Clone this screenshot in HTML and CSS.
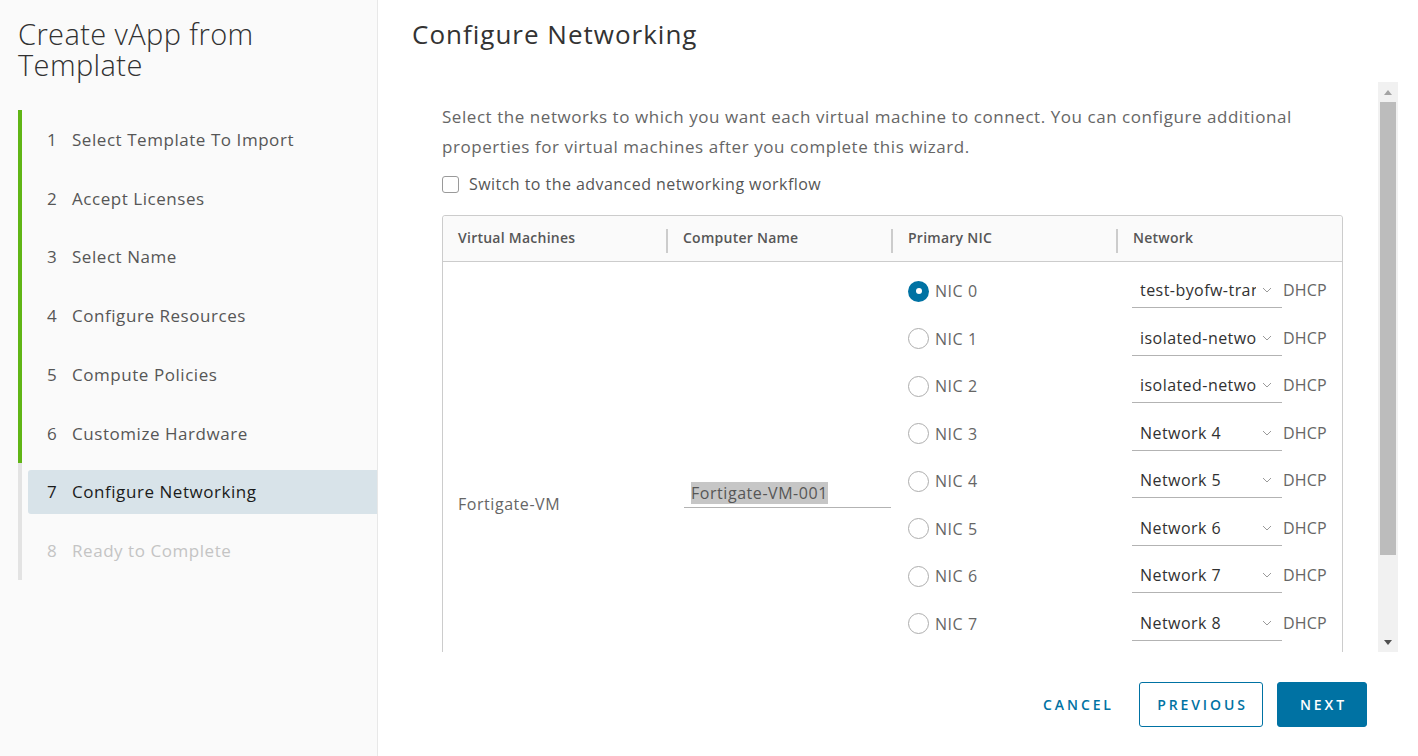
FILE: index.html
```html
<!DOCTYPE html>
<html>
<head>
<meta charset="utf-8">
<link rel="stylesheet" href="styles.css">
</head>
<body>
<div class="wizard">
  <aside class="sidebar">
    <h1 class="wiz-title">Create vApp from Template</h1>
    <ol class="steps">
      <li class="step done"><div class="step-link"><span class="num">1</span>Select Template To Import</div></li>
      <li class="step done"><div class="step-link"><span class="num">2</span>Accept Licenses</div></li>
      <li class="step done"><div class="step-link"><span class="num">3</span>Select Name</div></li>
      <li class="step done"><div class="step-link"><span class="num">4</span>Configure Resources</div></li>
      <li class="step done"><div class="step-link"><span class="num">5</span>Compute Policies</div></li>
      <li class="step done"><div class="step-link"><span class="num">6</span>Customize Hardware</div></li>
      <li class="step current"><div class="step-link"><span class="num">7</span>Configure Networking</div></li>
      <li class="step todo"><div class="step-link"><span class="num">8</span>Ready to Complete</div></li>
    </ol>
  </aside>
  <main class="main">
    <h2 class="page-title">Configure Networking</h2>
    <div class="scroll-area">
      <div class="scroll-content">
        <p class="desc">Select the networks to which you want each virtual machine to connect. You can configure additional properties for virtual machines after you complete this wizard.</p>
        <label class="check"><span class="box"></span>Switch to the advanced networking workflow</label>
        <div class="grid">
          <div class="grid-head">
            <div class="th">Virtual Machines</div>
            <div class="th sep">Computer Name</div>
            <div class="th sep">Primary NIC</div>
            <div class="th sep">Network</div>
          </div>
          <div class="grid-row">
            <div class="td vm">Fortigate-VM</div>
            <div class="td cname"><div class="text-input"><span class="sel">Fortigate-VM-001</span></div></div>
            <div class="td nics">
              <div class="nic"><span class="radio on"></span>NIC 0</div>
              <div class="nic"><span class="radio"></span>NIC 1</div>
              <div class="nic"><span class="radio"></span>NIC 2</div>
              <div class="nic"><span class="radio"></span>NIC 3</div>
              <div class="nic"><span class="radio"></span>NIC 4</div>
              <div class="nic"><span class="radio"></span>NIC 5</div>
              <div class="nic"><span class="radio"></span>NIC 6</div>
              <div class="nic"><span class="radio"></span>NIC 7</div>
              <div class="nic"><span class="radio"></span>NIC 8</div>
              <div class="nic"><span class="radio"></span>NIC 9</div>
            </div>
            <div class="td nets">
              <div class="net"><div class="select"><span class="val">test-byofw-transit</span><svg class="chev" width="10" height="6" viewBox="0 0 10 6"><path d="M1 1l4 4 4-4" fill="none" stroke="#9a9a9a" stroke-width="1"/></svg></div><span class="mode">DHCP</span></div>
              <div class="net"><div class="select"><span class="val">isolated-network-1</span><svg class="chev" width="10" height="6" viewBox="0 0 10 6"><path d="M1 1l4 4 4-4" fill="none" stroke="#9a9a9a" stroke-width="1"/></svg></div><span class="mode">DHCP</span></div>
              <div class="net"><div class="select"><span class="val">isolated-network-2</span><svg class="chev" width="10" height="6" viewBox="0 0 10 6"><path d="M1 1l4 4 4-4" fill="none" stroke="#9a9a9a" stroke-width="1"/></svg></div><span class="mode">DHCP</span></div>
              <div class="net"><div class="select"><span class="val">Network 4</span><svg class="chev" width="10" height="6" viewBox="0 0 10 6"><path d="M1 1l4 4 4-4" fill="none" stroke="#9a9a9a" stroke-width="1"/></svg></div><span class="mode">DHCP</span></div>
              <div class="net"><div class="select"><span class="val">Network 5</span><svg class="chev" width="10" height="6" viewBox="0 0 10 6"><path d="M1 1l4 4 4-4" fill="none" stroke="#9a9a9a" stroke-width="1"/></svg></div><span class="mode">DHCP</span></div>
              <div class="net"><div class="select"><span class="val">Network 6</span><svg class="chev" width="10" height="6" viewBox="0 0 10 6"><path d="M1 1l4 4 4-4" fill="none" stroke="#9a9a9a" stroke-width="1"/></svg></div><span class="mode">DHCP</span></div>
              <div class="net"><div class="select"><span class="val">Network 7</span><svg class="chev" width="10" height="6" viewBox="0 0 10 6"><path d="M1 1l4 4 4-4" fill="none" stroke="#9a9a9a" stroke-width="1"/></svg></div><span class="mode">DHCP</span></div>
              <div class="net"><div class="select"><span class="val">Network 8</span><svg class="chev" width="10" height="6" viewBox="0 0 10 6"><path d="M1 1l4 4 4-4" fill="none" stroke="#9a9a9a" stroke-width="1"/></svg></div><span class="mode">DHCP</span></div>
              <div class="net"><div class="select"><span class="val">Network 9</span><svg class="chev" width="10" height="6" viewBox="0 0 10 6"><path d="M1 1l4 4 4-4" fill="none" stroke="#9a9a9a" stroke-width="1"/></svg></div><span class="mode">DHCP</span></div>
              <div class="net"><div class="select"><span class="val">Network 10</span><svg class="chev" width="10" height="6" viewBox="0 0 10 6"><path d="M1 1l4 4 4-4" fill="none" stroke="#9a9a9a" stroke-width="1"/></svg></div><span class="mode">DHCP</span></div>
            </div>
          </div>
        </div>
      </div>
      <div class="scrollbar">
        <div class="sb-btn"><svg width="8" height="5" viewBox="0 0 8 5"><path d="M0 5L4 0L8 5Z" fill="#a3a3a3"/></svg></div>
        <div class="sb-track"><div class="sb-thumb"></div></div>
        <div class="sb-btn"><svg width="8" height="5" viewBox="0 0 8 5"><path d="M0 0L4 5L8 0Z" fill="#505050"/></svg></div>
      </div>
    </div>
    <footer class="footer">
      <button class="btn btn-link">CANCEL</button>
      <button class="btn btn-outline">PREVIOUS</button>
      <button class="btn btn-primary">NEXT</button>
    </footer>
  </main>
</div>
</body>
</html>
```

FILE: styles.css
```css
* { box-sizing: border-box; }
html, body { margin: 0; padding: 0; }
body {
  font-family: "Open Sans", "Liberation Sans", sans-serif;
  color: #565656;
  background: #fff;
  width: 1418px;
  height: 756px;
  overflow: hidden;
}
.wizard {
  display: flex;
  height: 756px;
}
.sidebar {
  width: 378px;
  flex: none;
  background: #fafafa;
  border-right: 1px solid #e8e8e8;
  padding: 18px 0 0 18px;
}
.wiz-title {
  margin: 0;
  font-size: 29px;
  font-weight: 300;
  line-height: 31px;
  color: #313131;
  letter-spacing: 0.4px;
  padding-right: 90px;
}
.steps {
  list-style: none;
  margin: 30px 0 0 0;
  padding: 0;
}
.step {
  height: 58.75px;
  border-left: 4px solid #e3e3e3;
  padding: 7px 0 7px 6px;
}
.step.done { border-left-color: #60b515; }
.step-link {
  height: 44.75px;
  display: flex;
  align-items: center;
  padding-left: 19px;
  font-size: 17px;
  letter-spacing: 0.55px;
  color: #565656;
  border-radius: 3px 0 0 3px;
}
.num { width: 25px; flex: none; }
.step.current .step-link { background: #d8e3e9; color: #1b1b1b; }
.step.todo .step-link { color: #c4c4c4; }

.main {
  flex: 1;
  display: flex;
  flex-direction: column;
  min-width: 0;
}
.page-title {
  margin: 0;
  padding: 16px 0 0 34px;
  height: 82px;
  font-size: 26px;
  font-weight: 400;
  letter-spacing: 1px;
  color: #333;
}
.scroll-area {
  height: 570px;
  display: flex;
  padding: 0 20px 0 34px;
}
.scroll-content {
  flex: 1;
  overflow: hidden;
  padding: 20px 0 0 30px;
}
.desc {
  margin: 0;
  font-size: 17px;
  letter-spacing: 0.55px;
  line-height: 30px;
  color: #666;
  width: 900px;
}
.check {
  display: flex;
  align-items: center;
  margin-top: 10px;
  font-size: 16px;
  letter-spacing: 0.45px;
  color: #565656;
  height: 24px;
}
.box {
  width: 17px;
  height: 17px;
  border: 1px solid #9a9a9a;
  border-radius: 3px;
  margin-right: 10px;
  background: #fff;
}
.grid {
  margin-top: 19px;
  width: 901px;
  border: 1px solid #ccc;
  border-radius: 3px;
}
.grid-head {
  display: grid;
  grid-template-columns: 225px 225px 225px 224px;
  height: 46px;
  background: #fafafa;
  border-bottom: 1px solid #ccc;
  border-radius: 3px 3px 0 0;
}
.th {
  display: flex;
  align-items: center;
  padding-left: 15px;
  padding-bottom: 3px;
  font-size: 14px;
  font-weight: 600;
  letter-spacing: 0.25px;
  color: #565656;
}
.grid-head .th.sep {
  position: relative;
}
.grid-head .th.sep::before {
  content: "";
  position: absolute;
  left: -2px;
  top: 13px;
  bottom: 8px;
  width: 2px;
  background: #ccc;
}
.grid-row {
  display: grid;
  grid-template-columns: 225px 225px 225px 224px;
}
.td { font-size: 16px; letter-spacing: 0.55px; color: #666; }
.vm {
  display: flex;
  align-items: center;
  padding-left: 15px;
  padding-bottom: 8px;
}
.cname {
  display: flex;
  align-items: center;
  padding: 0 0 26px 16px;
}
.text-input {
  width: 207px;
  height: 26px;
  border-bottom: 1px solid #b3b3b3;
  padding-left: 7px;
  font-size: 16px;
  line-height: 22px;
  color: #565656;
}
.sel { background: #c6c6c6; }
.nics { padding: 17px 0 0 15px; }
.nic {
  display: flex;
  align-items: center;
  height: 47.5px;
  font-size: 16px;
  color: #666;
  padding-bottom: 23px;
}
.radio {
  width: 21px;
  height: 21px;
  border-radius: 50%;
  border: 1px solid #adadad;
  margin-right: 6px;
  background: #fff;
  position: relative;
}
.radio.on {
  border: none;
  background: #0072a3;
}
.radio.on::after {
  content: "";
  position: absolute;
  left: 7.5px;
  top: 7.5px;
  width: 6px;
  height: 6px;
  border-radius: 50%;
  background: #fff;
}
.nets { padding: 17px 0 0 14px; }
.net {
  display: flex;
  align-items: flex-start;
  height: 47.5px;
}
.select {
  width: 150px;
  height: 29px;
  border-bottom: 1px solid #b3b3b3;
  display: flex;
  align-items: center;
  padding: 0 10px 6px 8px;
}
.val {
  flex: 1;
  min-width: 0;
  white-space: nowrap;
  overflow: hidden;
  color: #313131;
  font-size: 16px;
  letter-spacing: 0.45px;
}
.chev { flex: none; margin-left: 6px; }
.mode {
  font-size: 16px;
  letter-spacing: 0.2px;
  color: #666;
  margin-left: 1px;
  line-height: 23px;
}
.scrollbar {
  width: 20px;
  flex: none;
  background: #f1f1f1;
  display: flex;
  flex-direction: column;
}
.sb-btn {
  height: 20px;
  display: flex;
  align-items: center;
  justify-content: center;
}
.sb-track { flex: 1; padding: 0 2px; }
.sb-thumb {
  height: 453px;
  background: #bcbcbc;
}
.footer {
  flex: 1;
  display: flex;
  justify-content: flex-end;
  align-items: center;
  gap: 14px;
  padding: 0 51px 0 0;
}
.btn {
  font-family: "Open Sans", "Liberation Sans", sans-serif;
  height: 45px;
  font-size: 14px;
  font-weight: 600;
  letter-spacing: 2.9px;
  border-radius: 3px;
  padding: 0 0 0 3px;
  text-align: center;
  cursor: pointer;
}
.btn-link {
  background: transparent;
  border: 1px solid transparent;
  color: #0072a3;
  width: 96px;
}
.btn-outline {
  background: #fff;
  border: 1px solid #0072a3;
  color: #0072a3;
  width: 124px;
}
.btn-primary {
  background: #0072a3;
  border: 1px solid #0072a3;
  color: #fff;
  width: 90px;
}
```
